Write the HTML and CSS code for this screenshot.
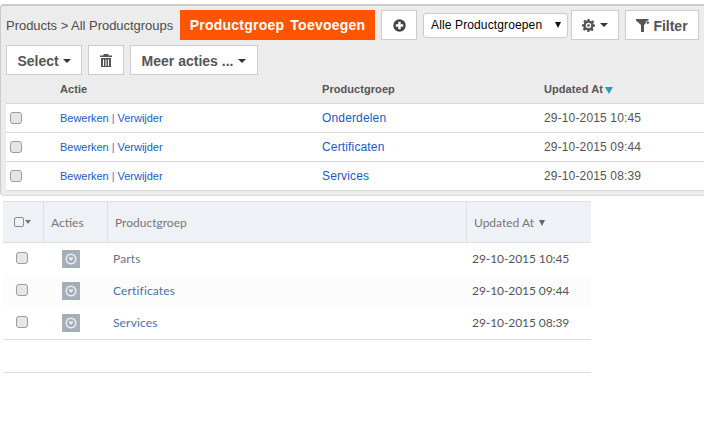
FILE: index.html
```html
<!DOCTYPE html>
<html lang="nl">
<head>
<meta charset="utf-8">
<title>Productgroepen</title>
<link rel="stylesheet" href="styles.css">
</head>
<body>
<section class="panel">
  <div class="toolbar top">
    <span class="crumb">Products &gt; All Productgroups</span>
    <a class="orange">Productgroep Toevoegen</a>
    <button class="btn plus" aria-label="Toevoegen"><svg width="13" height="13" viewBox="0 0 13 13"><circle cx="6.5" cy="6.5" r="6.2" fill="#444"/><path d="M5.3 2.8h2.4v2.5h2.5v2.4H7.7v2.5H5.3V7.7H2.8V5.3h2.5z" fill="#fff"/></svg></button>
    <span class="selwrap"><select class="sel"><option>Alle Productgroepen</option></select><i class="selarrow"></i></span>
    <button class="btn gear" aria-label="Instellingen"><svg width="13" height="13" viewBox="0 0 24 24"><path fill="#555" fill-rule="evenodd" d="M10 0h4l.7 3.4 2.2.9L19.800 2.400 22.600 5.200 20.700 8.100l.9 2.200L24 10v4l-3.400.7-.9 2.200 1.900 2.900-2.800 2.800-2.900-1.900-2.200.9L14 24h-4l-.7-3.400-2.200-.9-2.900 1.900-2.800-2.800 1.900-2.900-.9-2.200L0 14v-4l3.400-.7.9-2.200-1.900-2.900L5.200 1.400l2.900 1.900 2.200-.9zM12 7a5 5 0 1 0 0 10 5 5 0 0 0 0-10zm0 2.500a2.500 2.500 0 1 1 0 5 2.500 2.500 0 0 1 0-5z"/></svg><i class="caret"></i></button>
    <button class="btn filter"><svg width="14" height="13" viewBox="0 0 14 13"><path fill="#555" d="M0 0h12.500v1.600L8 6v7H5V6L0 1.600z"/><circle cx="11.800" cy="3.600" r="1.700" fill="#555" stroke="#fff" stroke-width=".8"/></svg>Filter</button>
  </div>
  <div class="toolbar second">
    <button class="btn wide select">Select<i class="caret"></i></button>
    <button class="btn trash" aria-label="Verwijderen"><svg width="12" height="13" viewBox="0 0 12 13"><path fill="#555" d="M4 0h4l1 1.500h3V3H0V1.500h3zM1 4h10v9H1zm2 1.500V12h1V5.500zm2.500 0V12h1V5.500zm2.500 0V12h1V5.500z"/></svg></button>
    <button class="btn wide more">Meer acties ...<i class="caret"></i></button>
  </div>
  <div class="grid head">
    <span></span><span>Actie</span><span>Productgroep</span><span>Updated At<i class="sortcaret"></i></span>
  </div>
  <div class="grid row"><input type="checkbox" class="check"><span class="act"><a>Bewerken</a> <b>|</b> <a>Verwijder</a></span><a>Onderdelen</a><span class="date">29-10-2015 10:45</span></div>
  <div class="grid row"><input type="checkbox" class="check"><span class="act"><a>Bewerken</a> <b>|</b> <a>Verwijder</a></span><a>Certificaten</a><span class="date">29-10-2015 09:44</span></div>
  <div class="grid row"><input type="checkbox" class="check"><span class="act"><a>Bewerken</a> <b>|</b> <a>Verwijder</a></span><a>Services</a><span class="date">29-10-2015 08:39</span></div>
</section>

<section class="list">
  <div class="lgrid lhead">
    <span class="lh first"><i class="box"></i><i class="mini"></i></span>
    <span class="lh">Acties</span>
    <span class="lh">Productgroep</span>
    <span class="lh">Updated At<i class="dcaret"></i></span>
  </div>
  <div class="lgrid lrow"><span class="cc"><input type="checkbox" class="check"></span><span class="cc"><i class="action"><svg width="12" height="12" viewBox="0 0 12 12"><circle cx="6" cy="6" r="4.800" fill="none" stroke="#eef1f4" stroke-width="1.500"/><path d="M3.200 4.500h5.600L6 8z" fill="#eef1f4"/></svg></i></span><a class="name">Parts</a><span class="ldate">29-10-2015 10:45</span></div>
  <div class="lgrid lrow alt"><span class="cc"><input type="checkbox" class="check"></span><span class="cc"><i class="action"><svg width="12" height="12" viewBox="0 0 12 12"><circle cx="6" cy="6" r="4.800" fill="none" stroke="#eef1f4" stroke-width="1.500"/><path d="M3.200 4.500h5.600L6 8z" fill="#eef1f4"/></svg></i></span><a class="name">Certificates</a><span class="ldate">29-10-2015 09:44</span></div>
  <div class="lgrid lrow"><span class="cc"><input type="checkbox" class="check"></span><span class="cc"><i class="action"><svg width="12" height="12" viewBox="0 0 12 12"><circle cx="6" cy="6" r="4.800" fill="none" stroke="#eef1f4" stroke-width="1.500"/><path d="M3.200 4.500h5.600L6 8z" fill="#eef1f4"/></svg></i></span><a class="name">Services</a><span class="ldate">29-10-2015 08:39</span></div>
  <div class="lfoot"></div>
</section>
</body>
</html>
```
FILE: styles.css
```css
* { box-sizing: border-box; }
html, body { background: #fff; }
body {
  margin: 0;
  padding-top: 4px;
  font-family: "Liberation Sans", Arial, sans-serif;
  font-size: 12px;
  color: #555;
}
.panel {
  width: 704px;
  height: 192px;
  background: #ececec;
  border-top: 2px solid #ccc;
  border-left: 1px solid #ccc;
  border-bottom: 1px solid #ddd;
  border-radius: 4px 0 0 4px;
  padding-left: 5px;
}
.toolbar { display: flex; align-items: center; }
.top { height: 30px; margin-top: 4px; }
.second { height: 30px; margin-top: 5px; gap: 6px; }
.crumb { width: 174px; font-size: 13px; letter-spacing: -0.030px; color: #4d4d4d; white-space: nowrap; }
.orange {
  width: 195px;
  height: 30px;
  background: #f50;
  color: #fff;
  font-weight: bold;
  font-size: 14px;
  word-spacing: 2px;
  letter-spacing: 0.230px;
  display: flex;
  align-items: center;
  justify-content: center;
}
.btn {
  height: 30px;
  background: #fff;
  border: 1px solid #ccc;
  border-radius: 0;
  padding: 0;
  font-family: inherit;
  font-weight: bold;
  font-size: 14px;
  color: #555;
  display: flex;
  align-items: center;
  justify-content: center;
}
.plus { width: 36px; margin-left: 6px; }
.selwrap { position: relative; display: block; width: 145px; height: 25px; margin-left: 6px; }
.sel {
  appearance: none;
  display: block;
  width: 100%;
  height: 100%;
  background: #fff;
  border: 1px solid #ccc;
  border-radius: 3px;
  padding: 0 0 0 7px;
  font-family: inherit;
  font-size: 12px;
  letter-spacing: 0.130px;
  color: #000;
}
.selarrow {
  position: absolute;
  left: 132px;
  top: 9px;
  border-left: 3px solid transparent;
  border-right: 3px solid transparent;
  border-top: 6px solid #111;
}
.gear { width: 48px; margin-left: 3px; gap: 5px; }
.filter { width: 74px; margin-left: 6px; gap: 3px; padding-top: 1px; }
.caret {
  display: inline-block;
  border-left: 4px solid transparent;
  border-right: 4px solid transparent;
  border-top: 4px solid #333;
}
.wide { gap: 4px; padding-top: 1px; }
.select { width: 76px; }
.trash { width: 36px; }
.more { width: 128px; gap: 5px; }
.grid {
  display: grid;
  grid-template-columns: 54px 262px 222px 1fr;
  align-items: center;
  width: 698px;
}
.head { height: 28px; font-size: 11px; font-weight: bold; color: #555; letter-spacing: 0.060px; }
.sortcaret {
  display: inline-block;
  margin-left: 2px;
  border-left: 4px solid transparent;
  border-right: 4px solid transparent;
  border-top: 7px solid #2a9bc0;
  vertical-align: -1px;
}
.row {
  height: 29px;
  background: #fff;
  border-top: 1px solid #d8d8d8;
  color: #555;
  letter-spacing: 0.150px;
}
.row:last-child { height: 30px; border-bottom: 1px solid #d8d8d8; }
.row a { color: #1a5bc8; }
.act { font-size: 11px; letter-spacing: -0.030px; }
.act b { font-weight: normal; color: #7a5fc0; }
.check {
  appearance: none;
  width: 12px;
  height: 12px;
  margin: 0 0 0 4px;
  background: #e6e6e6;
  border: 1px solid #9c9c9c;
  border-radius: 3px;
  display: block;
}
.list {
  width: 588px;
  margin: 5px 0 0 3px;
  font-family: Lato, sans-serif;
  font-size: 12px;
}
.lgrid {
  display: grid;
  grid-template-columns: 40px 64px 359px 1fr;
  align-items: center;
}
.lhead {
  height: 42px;
  background: #eef1f6;
  border-top: 1px solid #dfe1e5;
  border-bottom: 1px solid #dfe1e5;
  align-items: stretch;
  color: #777;
}
.lh {
  display: flex;
  align-items: center;
  padding-left: 7px;
  border-left: 1px solid #dcdfe3;
}
.lh.first { border-left: 0; padding-left: 11px; gap: 1px; }
.box { width: 10px; height: 10px; border: 1px solid #8a8a8a; border-radius: 2px; }
.mini {
  border-left: 3.500px solid transparent;
  border-right: 3.500px solid transparent;
  border-top: 4px solid #777;
}
.dcaret {
  margin-left: 5px;
  margin-top: 1px;
  border-left: 3.500px solid transparent;
  border-right: 3.500px solid transparent;
  border-top: 6px solid #666;
}
.lrow { height: 32px; }
.alt { background: #fcfcfc; }
.cc { display: flex; align-items: center; }
.cc .check { margin: 0 0 2px 13px; }
.action {
  width: 18px;
  height: 18px;
  margin-left: 19px;
  background: #a3aeb9;
  display: flex;
  align-items: center;
  justify-content: center;
}
.name { color: #4a70a8; padding: 0 0 2px 6px; letter-spacing: 0.150px; }
.lrow:nth-child(2) .name { color: #6a7090; }
.ldate { color: #555; padding: 0 0 2px 6px; letter-spacing: -0.080px; }
.lfoot {
  height: 34px;
  border-top: 1px solid #dcdcdc;
  border-bottom: 1px solid #dcdcdc;
}
```
